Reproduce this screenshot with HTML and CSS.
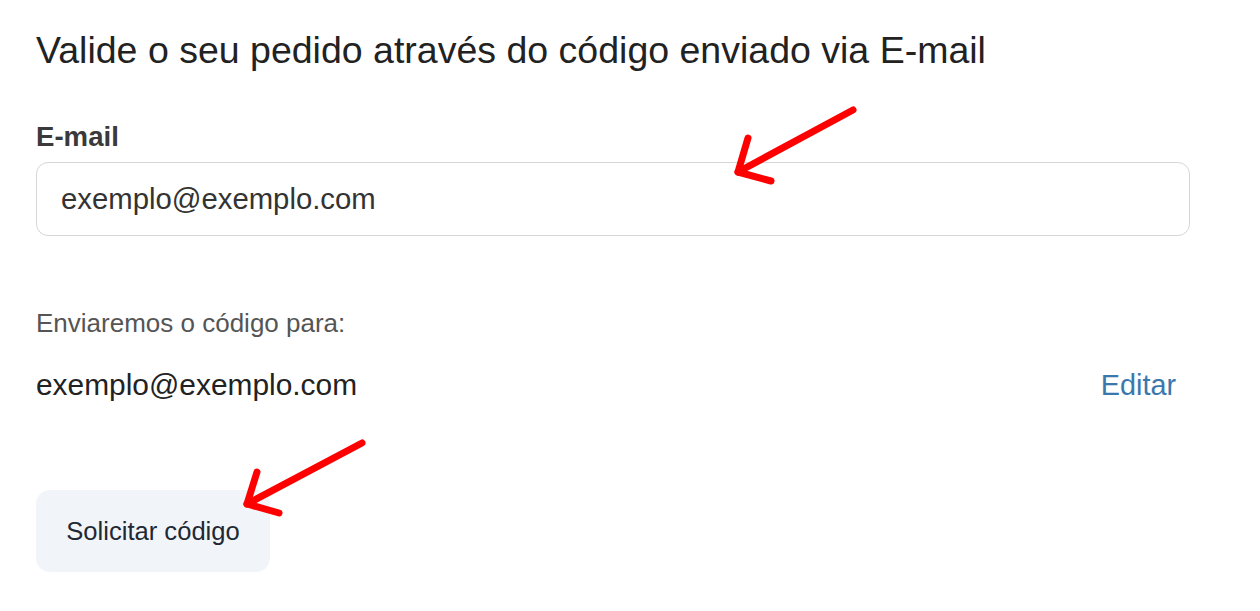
FILE: index.html
```html
<!DOCTYPE html>
<html lang="pt-BR">
<head>
  <meta charset="UTF-8" />
  <meta name="viewport" content="width=device-width, initial-scale=1.0" />
  <title>Validar pedido</title>
  <link rel="stylesheet" href="styles.css">
</head>
<body>
  <main class="validate">
    <h1 class="validate-title">Valide o seu pedido através do código enviado via E-mail</h1>

    <label class="field-label" for="emailInput">E-mail</label>
    <input type="text" id="emailInput" class="field-input" value="exemplo@exemplo.com" />

    <p class="send-note">Enviaremos o código para:</p>
    <div class="send-row">
      <span class="send-email">exemplo@exemplo.com</span>
      <a class="edit-link" href="#">Editar</a>
    </div>

    <button class="request-btn">Solicitar código</button>
  </main>

  <!-- annotation arrows drawn over the screenshot -->
  <svg class="annotations" width="1260" height="611" viewBox="0 0 1260 611">
    <g stroke="#ff0000" stroke-width="7" stroke-linecap="round" stroke-linejoin="round" fill="none">
      <path d="M853 110 L738 172" />
      <path d="M748 138 L738 172 L771 181" />
      <path d="M362 443 L247 504" />
      <path d="M257 472 L247 504 L279 513" />
    </g>
  </svg>
</body>
</html>
```

FILE: styles.css
```css
:root {
  --text-dark: #222;
  --text-label: #3a3a3a;
  --text-muted: #555;
  --border-color: #d6d6d6;
  --link-color: #3a78ab;
  --btn-bg: #f1f5fa;
}

body {
  margin: 0;
  font-family: "Liberation Sans", Arial, sans-serif;
  background: #fff;
  color: var(--text-dark);
}

.validate {
  width: 1154px;
  margin-left: 36px;
  padding-top: 28px;
  display: flex;
  flex-direction: column;
  align-items: flex-start;
}

.validate-title {
  margin: 0;
  font-size: 37.5px;
  line-height: 44px;
  font-weight: normal;
  color: var(--text-dark);
}

.field-label {
  margin-top: 48px;
  font-size: 27.6px;
  line-height: 34px;
  font-weight: bold;
  color: var(--text-label);
}

.field-input {
  box-sizing: border-box;
  width: 100%;
  height: 74px;
  margin-top: 8px;
  padding: 0 24px;
  border: 1.5px solid var(--border-color);
  border-radius: 12px;
  font-family: inherit;
  font-size: 29.3px;
  color: #333;
  outline: none;
}

.send-note {
  margin: 71px 0 0;
  font-size: 26px;
  line-height: 32px;
  color: var(--text-muted);
}

.send-row {
  box-sizing: border-box;
  width: 100%;
  margin-top: 28px;
  padding-right: 14px;
  display: flex;
  justify-content: space-between;
  align-items: baseline;
  font-size: 29.9px;
  line-height: 36px;
}

.send-email {
  color: var(--text-dark);
}

.edit-link {
  font-size: 28.8px;
  color: var(--link-color);
  text-decoration: none;
}

.request-btn {
  margin-top: 87px;
  width: 234px;
  height: 82px;
  border: none;
  border-radius: 14px;
  background-color: var(--btn-bg);
  font-family: inherit;
  font-size: 25.6px;
  color: #1f2933;
  cursor: pointer;
}

.annotations {
  position: absolute;
  top: 0;
  left: 0;
  pointer-events: none;
}
```
